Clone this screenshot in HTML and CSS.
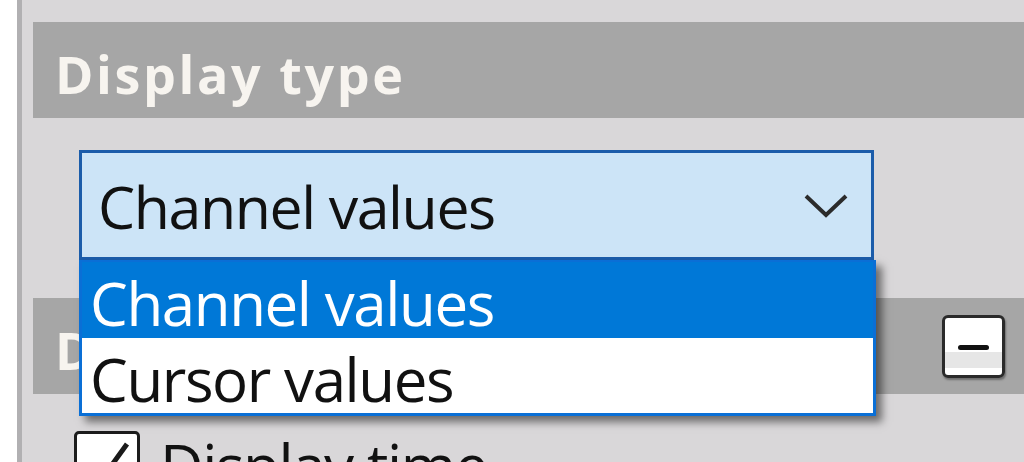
FILE: index.html
```html
<!DOCTYPE html>
<html>
<head>
<meta charset="utf-8">
<link rel="stylesheet" href="styles.css">
</head>
<body>
<div class="app">
  <div class="gutter"></div>
  <div class="divider"></div>
  <div class="panel">
    <div class="section-header"><span>Display type</span></div>
    <div class="combo-wrap">
      <div class="combo">
        <span class="combo-text">Channel values</span>
        <svg class="chevron" width="44" height="26" viewBox="0 0 44 26"><polyline points="2,3 22,22 42,3" fill="none" stroke="#2b2b2b" stroke-width="4"/></svg>
      </div>
      <div class="dropdown">
        <div class="option selected">Channel values</div>
        <div class="option">Cursor values</div>
      </div>
    </div>
    <div class="section-header second">
      <span>Display</span>
      <div class="collapse-btn"><span class="minus"></span></div>
    </div>
    <div class="check-row">
      <div class="checkbox">
        <svg width="60" height="60" viewBox="0 0 60 60"><polyline points="12,32 24,46 50,10" fill="none" stroke="#1a1a1a" stroke-width="5"/></svg>
      </div>
      <span class="check-label">Display time</span>
    </div>
  </div>
</div>
</body>
</html>
```

FILE: styles.css
```css
html, body {
  margin: 0;
  padding: 0;
  width: 1024px;
  height: 462px;
  overflow: hidden;
  background: #ffffff;
  font-family: "Open Sans", "Noto Sans", sans-serif;
}

.app {
  display: flex;
  height: 462px;
}

.gutter {
  width: 17px;
  background: #ffffff;
  flex: none;
}

.divider {
  width: 5px;
  background: #b1b0b2;
  flex: none;
}

.panel {
  flex: 1;
  background: #d9d7d9;
  padding-top: 22px;
  overflow: hidden;
}

.section-header {
  margin-left: 11px;
  height: 96px;
  background: #a6a6a6;
  display: flex;
  align-items: center;
  padding-left: 22px;
  padding-top: 6px;
  box-sizing: border-box;
  color: #f7f4ef;
  font-weight: bold;
  font-size: 52px;
  letter-spacing: 2.6px;
  position: relative;
}

.section-header.second {
  margin-top: 38px;
}

.combo-wrap {
  position: relative;
  margin-left: 57px;
  margin-top: 32px;
  width: 795px;
}

.combo {
  height: 110px;
  box-sizing: border-box;
  border: 3px solid #1b5caa;
  background: #cce4f7;
  display: flex;
  align-items: center;
  padding-left: 16px;
  padding-right: 23px;
  color: #111111;
  font-size: 59px;
  letter-spacing: -1.4px;
}

.combo-text {
  flex: 1;
  padding-top: 2px;
}

.chevron {
  display: block;
  margin-top: 2px;
}

.dropdown {
  position: absolute;
  left: 0;
  top: 100%;
  width: 797px;
  box-sizing: border-box;
  border: 3px solid #0a6fd6;
  border-top-width: 2px;
  background: #ffffff;
  box-shadow: 6px 6px 8px rgba(0, 0, 0, 0.5);
  z-index: 2;
  font-size: 60px;
  letter-spacing: -1.4px;
}

.option {
  height: 75px;
  line-height: 82px;
  padding-left: 8px;
  color: #111111;
}

.option.selected {
  height: 76px;
  background: #0078d7;
  color: #ffffff;
}

.collapse-btn {
  position: absolute;
  left: 909px;
  top: 17px;
  width: 63px;
  height: 63px;
  box-sizing: border-box;
  border: 3px solid #2a2a2a;
  border-radius: 6px;
  background: linear-gradient(#ffffff 0, #ffffff 34px, #e6e6e6 34px, #e6e6e6 50px, #ffffff 50px);
  box-shadow: 1px 2px 2px rgba(0, 0, 0, 0.35);
}

.minus {
  position: absolute;
  left: 13px;
  top: 27px;
  width: 31px;
  height: 5px;
  border-radius: 3px;
  background: #111111;
}

.check-row {
  display: flex;
  align-items: flex-start;
  margin-top: 37px;
  margin-left: 52px;
  gap: 20px;
}

.checkbox {
  width: 66px;
  height: 66px;
  box-sizing: border-box;
  border: 3px solid #1c1c1c;
  border-radius: 5px;
  background: #ffffff;
  flex: none;
  display: flex;
  align-items: center;
  justify-content: center;
}

.check-label {
  font-size: 60px;
  letter-spacing: -1.4px;
  color: #111111;
  line-height: 1;
  padding-top: 4px;
}
```
